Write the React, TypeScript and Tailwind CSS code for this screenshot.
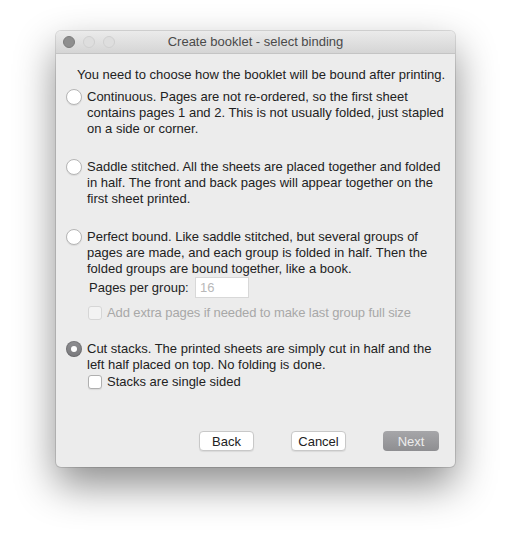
import React from 'react';

const font = { fontFamily: '"Liberation Sans", Arial, sans-serif' };

const Radio = ({ checked }: { checked?: boolean }) =>
  checked ? (
    <span className="flex h-[16px] w-[16px] shrink-0 items-center justify-center rounded-full bg-gradient-to-b from-[#8f8f92] to-[#7a7a7d] shadow-[inset_0_0_0_1px_rgba(0,0,0,0.15)]">
      <span className="block h-[6px] w-[6px] rounded-full bg-white" />
    </span>
  ) : (
    <span className="block h-[16px] w-[16px] shrink-0 rounded-full border border-[#b5b5b5] bg-white shadow-[0_1px_1px_rgba(0,0,0,0.08)]" />
  );

const Checkbox = ({ disabled }: { disabled?: boolean }) => (
  <span
    className={`block h-[14px] w-[14px] shrink-0 rounded-[3px] border ${
      disabled ? 'border-[#d6d6d6] bg-[#f3f3f3]' : 'border-[#b0b0b0] bg-white shadow-[0_1px_1px_rgba(0,0,0,0.08)]'
    }`}
  />
);

const Option = ({ checked, lines }: { checked?: boolean; lines: string[] }) => (
  <div className="flex items-start gap-[5px] pl-[10px]">
    <Radio checked={checked} />
    <p className="text-[13px] leading-[16px] text-[#222]">
      {lines.map((l, i) => (
        <span key={i} className="block whitespace-nowrap">
          {l}
        </span>
      ))}
    </p>
  </div>
);

export default function App() {
  return (
    <div className="h-[548px] w-[511px] bg-white pl-[56px] pt-[31px]" style={font}>
      <div className="flex h-[436px] w-[399px] flex-col overflow-hidden rounded-[5px] bg-[#ececec] shadow-[0_18px_40px_rgba(0,0,0,0.45),0_0_0_1px_rgba(0,0,0,0.12)]">
        {/* title bar */}
        <div className="relative flex h-[23px] shrink-0 items-center justify-center border-b border-[#c4c4c4] bg-gradient-to-b from-[#ebebeb] to-[#d5d5d5]">
          <div className="absolute left-[7px] top-[5px] flex gap-[8px]">
            <span className="h-[12px] w-[12px] rounded-full border border-[#7c7c7c] bg-[#8e8e8e]" />
            <span className="h-[12px] w-[12px] rounded-full border border-[#cfcfcf] bg-[#dedede]" />
            <span className="h-[12px] w-[12px] rounded-full border border-[#cfcfcf] bg-[#dedede]" />
          </div>
          <span className="text-[13px] text-[#4a4a4a]">Create booklet - select binding</span>
        </div>

        {/* body */}
        <div className="flex flex-1 flex-col pt-[13px]">
          <p className="pl-[21px] text-[13px] leading-[16px] text-[#222]">
            You need to choose how the booklet will be bound after printing.
          </p>

          <div className="mt-[6px]">
            <Option
              lines={[
                'Continuous. Pages are not re-ordered, so the first sheet',
                'contains pages 1 and 2. This is not usually folded, just stapled',
                'on a side or corner.',
              ]}
            />
          </div>

          <div className="mt-[22px]">
            <Option
              lines={[
                'Saddle stitched. All the sheets are placed together and folded',
                'in half. The front and back pages will appear together on the',
                'first sheet printed.',
              ]}
            />
          </div>

          <div className="mt-[22px]">
            <Option
              lines={[
                'Perfect bound. Like saddle stitched, but several groups of',
                'pages are made, and each group is folded in half. Then the',
                'folded groups are bound together, like a book.',
              ]}
            />
            <div className="flex items-center pl-[33px]">
              <span className="w-[106px] text-[13px] text-[#222]">Pages per group:</span>
              <span className="flex h-[21px] w-[54px] items-center border border-[#d8d8d8] bg-white pl-[4px] text-[13px] text-[#b8b8b8]">
                16
              </span>
            </div>
            <div className="mt-[7px] flex items-center gap-[5px] pl-[32px]">
              <Checkbox disabled />
              <span className="text-[13px] leading-[16px] tracking-[-0.1px] text-[#a8a8a8]">
                Add extra pages if needed to make last group full size
              </span>
            </div>
          </div>

          <div className="mt-[20px]">
            <Option
              checked
              lines={[
                'Cut stacks. The printed sheets are simply cut in half and the',
                'left half placed on top. No folding is done.',
              ]}
            />
            <div className="mt-[1px] flex items-center gap-[5px] pl-[32px]">
              <Checkbox />
              <span className="text-[13px] leading-[16px] text-[#222]">Stacks are single sided</span>
            </div>
          </div>

          {/* buttons */}
          <div className="mt-auto mb-[16px] flex items-center pl-[143px]">
            <button className="h-[20px] w-[55px] rounded-[4px] border border-[#c8c8c8] bg-white text-[13px] leading-none text-[#222] shadow-[0_1px_1px_rgba(0,0,0,0.08)]">
              Back
            </button>
            <button className="ml-[37px] h-[20px] w-[55px] rounded-[4px] border border-[#c8c8c8] bg-white text-[13px] leading-none text-[#222] shadow-[0_1px_1px_rgba(0,0,0,0.08)]">
              Cancel
            </button>
            <button className="ml-[37px] h-[20px] w-[56px] rounded-[4px] bg-gradient-to-b from-[#a6a6a9] to-[#8e8e91] text-[13px] leading-none text-[#ececec]">
              Next
            </button>
          </div>
        </div>
      </div>
    </div>
  );
}
